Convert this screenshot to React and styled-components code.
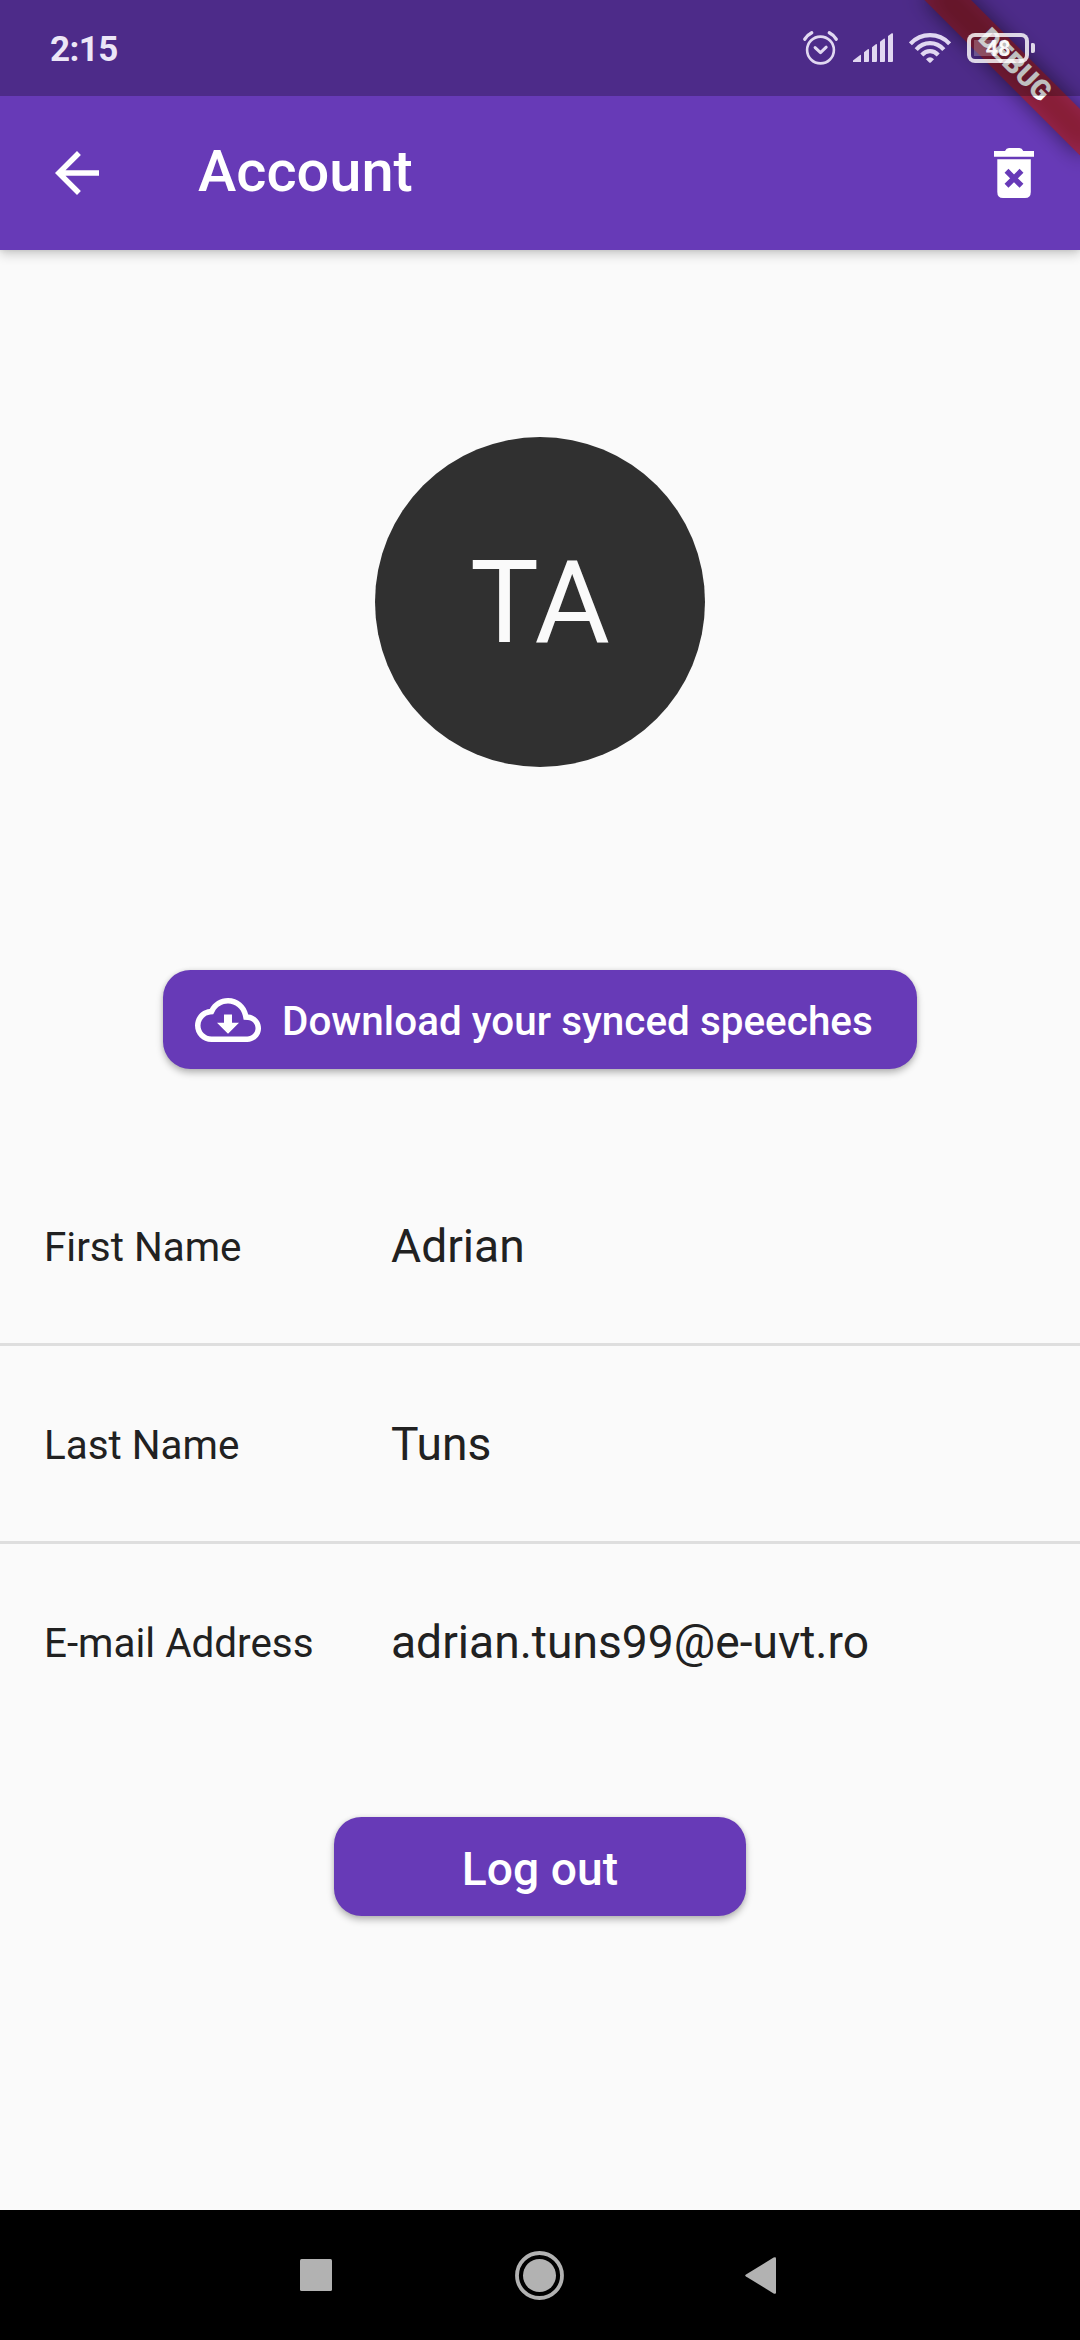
import React from "react";
import styled, { createGlobalStyle } from "styled-components";

const GlobalStyle = createGlobalStyle`
  * { box-sizing: border-box; }
  body { margin: 0; background: #fafafa; }
`;

const Screen = styled.div`
  position: relative;
  display: flex;
  flex-direction: column;
  width: 1080px;
  height: 2340px;
  overflow: hidden;
  background: #fafafa;
  color: #212121;
  font-family: Roboto, "Liberation Sans", sans-serif;
`;

const Header = styled.header`
  display: flex;
  flex-direction: column;
  background: #673ab7;
  box-shadow: 0 4px 11px rgba(0, 0, 0, 0.2), 0 0 5px rgba(0, 0, 0, 0.1);
`;

const StatusBar = styled.div`
  position: relative;
  z-index: 3;
  display: flex;
  align-items: center;
  justify-content: space-between;
  height: 96px;
  padding: 0 45px 0 50px;
  background: rgba(0, 0, 0, 0.25);
`;

const Clock = styled.span`
  padding-top: 3px;
  color: #ece6f7;
  font-size: 35px;
  line-height: 42px;
  font-weight: 700;
  letter-spacing: -0.6px;
`;

const StatusIcons = styled.div`
  display: flex;
  align-items: center;
  gap: 16px;
  color: #e1d8f1;
`;

const Battery = styled.div`
  display: flex;
  align-items: center;
  gap: 2px;
`;

const BatteryCell = styled.div`
  display: flex;
  align-items: center;
  justify-content: center;
  width: 62px;
  height: 30px;
  padding-top: 1px;
  border: 4px solid rgba(255, 255, 255, 0.82);
  border-radius: 8px;
  background: linear-gradient(rgba(255, 255, 255, 0.24), rgba(255, 255, 255, 0.24)) 3px 3px / 23px 16px no-repeat;
  color: rgba(255, 255, 255, 0.94);
  font-size: 22px;
  line-height: 22px;
  font-weight: 700;
`;

const BatteryTip = styled.div`
  width: 4px;
  height: 10px;
  border-radius: 1px 2px 2px 1px;
  background: rgba(255, 255, 255, 0.82);
`;

const AppBar = styled.div`
  display: flex;
  align-items: center;
  height: 154px;
  padding: 0 46px 0 44px;
  color: #fff;
`;

const IconButton = styled.button`
  display: flex;
  align-items: center;
  justify-content: center;
  padding: 0;
  border: 0;
  background: none;
  color: inherit;
`;

const Title = styled.h1`
  flex: 1;
  margin: 0 0 4px 88px;
  font-size: 57.75px;
  line-height: 68px;
  font-weight: 500;
`;

const Ribbon = styled.div`
  position: absolute;
  z-index: 2;
  top: 77px;
  left: 970px;
  width: 220px;
  height: 33px;
  transform: rotate(45deg);
  transform-origin: 110px -77px;
  color: #fff;
  text-align: center;
  font-size: 28px;
  line-height: 30px;
  font-weight: 900;

  &::before {
    content: "";
    position: absolute;
    inset: 0;
    background: rgba(0, 0, 0, 0.5);
    filter: blur(10.9px);
  }
`;

const RibbonLabel = styled.span`
  position: relative;
  display: block;
  padding-bottom: 3px;
  background: rgba(183, 28, 28, 0.627);
`;

const Content = styled.main`
  flex: 1;
  display: flex;
  flex-direction: column;
  align-items: center;
  padding-top: 187px;
`;

const Avatar = styled.div`
  display: flex;
  align-items: center;
  justify-content: center;
  width: 330px;
  height: 330px;
  padding-top: 1px;
  border-radius: 50%;
  background: #303030;
  color: #fafafa;
  font-size: 115.5px;
  line-height: 136px;
`;

const RaisedButton = styled.button`
  display: flex;
  align-items: center;
  justify-content: ${(p) => p.$justify || "center"};
  gap: ${(p) => p.$gap || 0}px;
  width: ${(p) => p.$width}px;
  height: 99px;
  margin-top: ${(p) => p.$top}px;
  padding: ${(p) => p.$padding || "0"};
  border: 0;
  border-radius: 27.5px;
  background: #673ab7;
  color: #fff;
  font-family: inherit;
  font-size: ${(p) => p.$size}px;
  font-weight: 500;
  white-space: nowrap;
  box-shadow: 0 4px 7px rgba(0, 0, 0, 0.26), 0 0 4px rgba(0, 0, 0, 0.1);
`;

const ButtonLabel = styled.span`
  padding-top: 4px;
  letter-spacing: 0.03px;
`;

const Fields = styled.dl`
  display: flex;
  flex-direction: column;
  align-self: stretch;
  margin: 79px 0 0;
`;

const Field = styled.div`
  display: flex;
  align-items: flex-start;
  height: 198px;
  padding: 70px 44px 0;
  border-bottom: 3px solid ${(p) => (p.$last ? "transparent" : "#dedede")};
`;

const Label = styled.dt`
  width: 347px;
  font-size: 40.4px;
  line-height: 59px;
`;

const Value = styled.dd`
  margin: 0;
  font-size: 46.2px;
  line-height: 56px;
`;

const NavBar = styled.nav`
  display: flex;
  align-items: center;
  height: 130px;
  padding-left: 300px;
  background: #000;
  color: #b2b2b2;
`;

const NavIcon = styled.svg`
  display: block;
  margin-left: ${(p) => p.$gap || 0}px;
`;

const AlarmIcon = () => (
  <svg width="33" height="36" viewBox="0.5 0 35 36" overflow="visible" preserveAspectRatio="xMidYMid slice" fill="none" stroke="currentColor" strokeWidth="3" strokeLinecap="round" strokeLinejoin="round">
    <circle cx="18" cy="20" r="13.4" strokeWidth="2.6" />
    <path d="M12.6 17.6 18 22.6 23.7 17.2" />
    <path d="M2.300 9.200Q4.800 5 9.200 2.800M33.700 9.200Q31.200 5 26.800 2.800" strokeWidth="3.400" />
  </svg>
);

const SignalIcon = () => (
  <svg width="40" height="30" viewBox="0 0 40 30" fill="currentColor">
    <path d="M0 29V27.500L7.200 22Q8 21.500 8 22.500V29Z" />
    <path d="M11 29V19.200L14.800 16.200Q16 15.600 16 17V28Q16 29 15 29Z" />
    <path d="M19 29V14.200L22.800 11.200Q24 10.600 24 12V28Q24 29 23 29Z" />
    <path d="M27 29V8.700L30.800 5.700Q32 5.100 32 6.500V28Q32 29 31 29Z" />
    <path d="M35 29V3L38.800 .3Q40 -.2 40 1V28Q40 29 39 29Z" />
  </svg>
);

const WifiIcon = () => (
  <svg width="42" height="30" viewBox="0 0 42 30" fill="none" stroke="currentColor" strokeWidth="4.200">
    <path d="M1.400 10.800Q9.500 2.200 21 2.200T40.600 10.800" />
    <path d="M7.200 16.600Q13 10.200 21 10.200T34.800 16.600" />
    <path d="M12.800 22Q16.500 18.200 21 18.200T29.200 22" />
    <path d="M17 26.200Q21 22.400 25 26.200L21.800 29.400Q21 30 20.200 29.400Z" fill="currentColor" stroke="none" />
  </svg>
);

const BackIcon = () => (
  <svg width="66" height="66" viewBox="0 0 24 24" fill="currentColor">
    <path d="M20 11H7.830l5.590-5.590L12 4l-8 8 8 8 1.410-1.410L7.830 13H20v-2z" />
  </svg>
);

const TrashIcon = () => (
  <svg width="40" height="50" viewBox="0 0 40 50">
    <path fill="#fff" d="M0 3H11Q12.300 0 15 0H25.500Q28 0 29.300 3H40V8.700H0Z" />
    <path fill="#fff" d="M3.300 11.200H36.800V44Q36.800 50 31 50H9Q3.300 50 3.300 44Z" />
    <path stroke="#673ab7" strokeWidth="5.500" d="M12.500 22.800 27.500 37.800M27.500 22.800 12.500 37.800" />
  </svg>
);

const CloudIcon = () => (
  <svg width="66" height="66" viewBox="0 0 24 24" fill="currentColor">
    <path d="M19.350 10.040C18.670 6.590 15.640 4 12 4 9.110 4 6.600 5.640 5.350 8.040 2.340 8.360 0 10.910 0 14c0 3.310 2.690 6 6 6h13c2.760 0 5-2.240 5-5 0-2.640-2.050-4.780-4.650-4.960zM19 18H6c-2.210 0-4-1.790-4-4 0-2.050 1.530-3.760 3.560-3.970l1.070-.11.5-.95C8.080 7.140 9.940 6 12 6c2.620 0 4.880 1.860 5.390 4.430l.3 1.500 1.530.110c1.560.1 2.780 1.410 2.780 2.960 0 1.650-1.350 3-3 3zM13.450 10h-2.900v3H8l4 4 4-4h-2.550z" />
  </svg>
);

const account = [
  ["First Name", "Adrian"],
  ["Last Name", "Tuns"],
  ["E-mail Address", "adrian.tuns99@e-uvt.ro"],
];

export default function App() {
  return (
    <Screen>
      <GlobalStyle />
      <Header>
        <StatusBar>
          <Clock>2:15</Clock>
          <StatusIcons>
            <AlarmIcon />
            <SignalIcon />
            <WifiIcon />
            <Battery>
              <BatteryCell>48</BatteryCell>
              <BatteryTip />
            </Battery>
          </StatusIcons>
        </StatusBar>
        <AppBar>
          <IconButton aria-label="Back">
            <BackIcon />
          </IconButton>
          <Title>Account</Title>
          <IconButton aria-label="Delete account">
            <TrashIcon />
          </IconButton>
        </AppBar>
      </Header>
      <Ribbon>
        <RibbonLabel>DEBUG</RibbonLabel>
      </Ribbon>
      <Content>
        <Avatar>TA</Avatar>
        <RaisedButton $width={754} $top={203} $gap={21} $size={40.4} $justify="flex-start" $padding="0 0 0 32px">
          <CloudIcon />
          <ButtonLabel>Download your synced speeches</ButtonLabel>
        </RaisedButton>
        <Fields>
          {account.map(([label, value], i) => (
            <Field key={label} $last={i === account.length - 1}>
              <Label>{label}</Label>
              <Value>{value}</Value>
            </Field>
          ))}
        </Fields>
        <RaisedButton $width={412} $top={75} $size={46.2}>
          <ButtonLabel>Log out</ButtonLabel>
        </RaisedButton>
      </Content>
      <NavBar>
        <NavIcon width="32" height="32" viewBox="0 0 32 32" fill="currentColor">
          <rect width="32" height="32" rx="1.500" />
        </NavIcon>
        <NavIcon $gap={183} width="49" height="49" viewBox="0 0 49 49" fill="currentColor">
          <circle cx="24.500" cy="24.500" r="22.500" fill="none" stroke="currentColor" strokeWidth="3.800" />
          <circle cx="24.500" cy="24.500" r="16.500" />
        </NavIcon>
        <NavIcon $gap={181} width="31" height="37" viewBox="0 0 31 37" fill="currentColor">
          <path d="M28.600.6Q31-.6 31 1.500V35.500Q31 37.600 28.600 36.400L1 19.500Q-.6 18.500 1 17.500Z" />
        </NavIcon>
      </NavBar>
    </Screen>
  );
}
